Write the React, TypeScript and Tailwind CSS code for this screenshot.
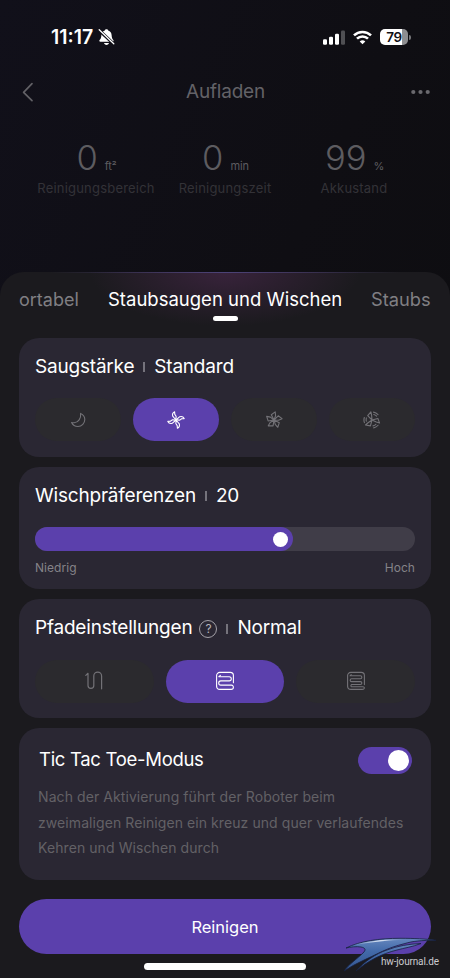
import { ReactNode, useState } from 'react';
import clsx from 'clsx';

const STATS = [
  { value: '0', unit: 'ft²', label: 'Reinigungsbereich', width: 'w-[126px]' },
  { value: '0', unit: 'min', label: 'Reinigungszeit', width: 'w-[132px]' },
  { value: '99', unit: '%', label: 'Akkustand', width: 'w-[126px]' },
];

function BellOffIcon() {
  return (
    <svg width="17" height="18" viewBox="0 0 17 18" fill="none">
      <path
        d="M8.5 1.2c.9 0 1.5.5 1.7 1.2 2.2.6 3.3 2.3 3.4 4.6.1 2.9.8 4 1.7 5 .6.7.2 1.8-.8 1.8H2.4c-1 0-1.4-1.1-.8-1.8 1-1 1.7-2.1 1.8-5 .1-2.3 1.2-4 3.4-4.6.2-.7.8-1.2 1.7-1.2Z"
        fill="#fff"
      />
      <path d="M6 15h5c-.2 1.1-1.2 1.9-2.5 1.9S6.2 16.1 6 15Z" fill="#fff" />
      <path d="M1 2.2 16 16.2" stroke="#111018" strokeWidth="3.2" />
      <path d="M1.2 1.8 15.8 15.8" stroke="#fff" strokeWidth="1.3" strokeLinecap="round" />
    </svg>
  );
}

function SignalIcon() {
  return (
    <svg width="22" height="15" viewBox="0 0 22 15" fill="#fff">
      <rect x="0" y="9.2" width="4" height="5.5" rx="1.2" />
      <rect x="6" y="6.8" width="4" height="7.9" rx="1.2" />
      <rect x="12" y="3.8" width="4" height="10.9" rx="1.2" />
      <rect x="18" y="0.6" width="4" height="14.1" rx="1.2" opacity=".27" />
    </svg>
  );
}

function WifiIcon() {
  return (
    <svg width="19" height="15" viewBox="0 0 19 15" fill="none" stroke="#fff" strokeWidth="2.6">
      <path d="M1 5.4a12.2 12.2 0 0 1 17 0" />
      <path d="M4 8.7a7.8 7.8 0 0 1 11 0" />
      <path d="M6.7 11.4a4.2 4.2 0 0 1 5.6 0L9.5 14.3Z" fill="#fff" stroke="none" />
    </svg>
  );
}

function StatusBar() {
  return (
    <div className="flex h-[74px] items-center pl-[51px] pr-[39px]">
      <span className="w-[46px] pt-px text-[19.5px] font-semibold text-white">11:17</span>
      <div className="ml-px">
        <BellOffIcon />
      </div>
      <div className="ml-auto flex items-center">
        <SignalIcon />
        <div className="ml-2">
          <WifiIcon />
        </div>
        <div className="ml-2 flex h-4 w-[28px] items-center justify-center rounded-[5px] bg-[linear-gradient(90deg,#fff_78%,#8d8d90_78%)] text-[13.5px] font-semibold tracking-[-0.3px] text-[#111016]">
          79
        </div>
        <div className="ml-px h-[5px] w-[2px] rounded-r-full bg-[#77767a]" />
      </div>
    </div>
  );
}

function MoonIcon() {
  return (
    <svg width="18" height="18" viewBox="0 0 18 18" fill="none" stroke="currentColor" strokeWidth="1.1" strokeLinejoin="round">
      <path d="M11.6 2.4c2.6 1.1 4.2 3.5 4.2 6.2 0 3.8-3 6.9-6.9 6.9-2.8 0-5.2-1.6-6.3-4 .8.2 1.7.3 2.6.2 4-.3 7.1-4.3 6.4-9.3Z" />
    </svg>
  );
}

function FanIcon() {
  return (
    <svg width="18" height="18" viewBox="0 0 18 18" fill="none" stroke="currentColor" strokeWidth="1.1" strokeLinejoin="round">
      {[0, 90, 180, 270].map((deg) => (
        <path
          key={deg}
          d="M9 9 5.7 5.2C5.2 3.4 6 1.6 7.6.8L7.8 3.4 9.1 5.2Z"
          transform={`rotate(${deg} 9 9)`}
        />
      ))}
    </svg>
  );
}

function StrongFanIcon() {
  return (
    <svg width="18" height="18" viewBox="0 0 18 18" fill="none" stroke="currentColor" strokeWidth="1.1" strokeLinejoin="round">
      {[0, 72, 144, 216, 288].map((deg) => (
        <path key={deg} d="M9 9 6.3 3.7 10.2.9 10.6 4.7Z" transform={`rotate(${deg} 9 9)`} />
      ))}
    </svg>
  );
}

function TurboFanIcon() {
  return (
    <svg width="18" height="18" viewBox="0 0 18 18" fill="none" stroke="currentColor" strokeWidth="1.1" strokeLinejoin="round" strokeLinecap="round">
      {[0, 120, 240].map((deg) => (
        <g key={deg} transform={`rotate(${deg} 9 9)`}>
          <path d="M9 9 4.7 4.7 7.9.9 8.6 4.2Z" />
          <path d="M10.5 1.1A8.2 8.2 0 0 1 15 3.6M10.8 3.5A5.9 5.9 0 0 1 13.6 5.2" />
        </g>
      ))}
    </svg>
  );
}

function LoosePathIcon() {
  return (
    <svg width="20" height="20" viewBox="0 0 20 20" fill="none" stroke="currentColor" strokeWidth="1.2" strokeLinecap="round" strokeLinejoin="round">
      <path d="M1.8 4.4 4 2.3v12.2a2.9 2.9 0 0 0 5.8 0V5a3.9 3.9 0 0 1 7.8 0v12.8" />
    </svg>
  );
}

function NormalPathIcon() {
  return (
    <svg width="20" height="20" viewBox="0 0 20 20" fill="none" stroke="currentColor" strokeWidth="1.1" strokeLinecap="round" strokeLinejoin="round">
      <path d="M1.6 15V4.6a3.2 3.2 0 0 1 3.2-3.2h10.4a3.2 3.2 0 0 1 3.2 3.2v7.2" />
      <path d="M5.4 4.3 3.8 5.7h10.4a2.1 2.1 0 0 1 0 4.2H5.8a2.1 2.1 0 0 0 0 4.2h10.7a2 2 0 0 1 1.9 2.2 2.2 2.2 0 0 1-2.2 2.1H5a3.4 3.4 0 0 1-3.4-3.4" />
    </svg>
  );
}

function DensePathIcon() {
  return (
    <svg width="20" height="20" viewBox="0 0 20 20" fill="none" stroke="currentColor" strokeWidth="1.1" strokeLinecap="round" strokeLinejoin="round">
      <path d="M1.6 15V4.6a3.2 3.2 0 0 1 3.2-3.2h10.4a3.2 3.2 0 0 1 3.2 3.2v9" />
      <path d="M5.2 3.7 4 4.8h10.4a1.45 1.45 0 0 1 0 2.9H5.6a1.45 1.45 0 0 0 0 2.9h8.8a1.45 1.45 0 0 1 0 2.9H5.6a1.3 1.3 0 0 0 0 2.3h11.2c2.3 0 2 2.6-.6 2.6H5A3.4 3.4 0 0 1 1.6 15" />
    </svg>
  );
}

function Card({ className, children }: { className?: string; children: ReactNode }) {
  return <section className={clsx('rounded-[20px] bg-[#2a2733] px-4', className)}>{children}</section>;
}

function CardTitle({ children }: { children: ReactNode }) {
  return (
    <h2 className="flex h-[56px] items-center pt-[3px] text-[19px] tracking-[-0.2px] text-white">{children}</h2>
  );
}

function Divider() {
  return <span className="mx-[9px] h-[10px] w-[2px] shrink-0 bg-[#75737c]" />;
}

interface PillProps {
  active: boolean;
  label: string;
  onClick: () => void;
  children: ReactNode;
}

function Pill({ active, label, onClick, children }: PillProps) {
  return (
    <button
      type="button"
      aria-label={label}
      onClick={onClick}
      className={clsx(
        'flex h-[43px] items-center justify-center rounded-full',
        active ? 'bg-[#5b40ac] text-white' : 'bg-[#2b2a2e] text-[#737277]'
      )}
    >
      {children}
    </button>
  );
}

const SUCTION = [
  { label: 'Leise', icon: <MoonIcon /> },
  { label: 'Standard', icon: <FanIcon /> },
  { label: 'Stark', icon: <StrongFanIcon /> },
  { label: 'Turbo', icon: <TurboFanIcon /> },
];

const PATHS = [
  { label: 'Schnell', icon: <LoosePathIcon /> },
  { label: 'Normal', icon: <NormalPathIcon /> },
  { label: 'Gründlich', icon: <DensePathIcon /> },
];

function Watermark() {
  return (
    <div className="absolute bottom-0 right-0 h-[48px] w-[110px]">
      <svg width="110" height="48" viewBox="0 0 110 48" className="absolute inset-0">
        <defs>
          <linearGradient id="wing" x1="0" y1="0" x2="0" y2="1">
            <stop offset="0" stopColor="#6486bd" />
            <stop offset=".4" stopColor="#426aa9" />
            <stop offset="1" stopColor="#34558f" />
          </linearGradient>
          <linearGradient id="shine" x1="0" y1="0" x2="1" y2="0">
            <stop offset="0" stopColor="#8ea6cc" stopOpacity=".2" />
            <stop offset=".5" stopColor="#e6eef8" />
            <stop offset="1" stopColor="#8ea6cc" stopOpacity=".1" />
          </linearGradient>
        </defs>
        <g fill="url(#wing)" stroke="#17203f" strokeWidth=".8">
          <path d="M6 18C20 11 40 8.300 60 8.300c14 0 26 .6 36 2-14-.2-24 1-31 3.200-9 2.300-17 5-24 8.500C29 28 16 33 4 41c5-7 13-12 19-18 3-3 3-5-2-6-5-.8-10 0-15 1Z" />
          <path d="M16 41c8-9 19-17 31-21 10-4 22-6 34-6.500-9 3.500-17 4.500-24 6.500-16 4-29 11-41 21Z" />
        </g>
        <path d="M12 15.500C28 10.500 46 9 68 9.600 48 10.600 30 12 12 15.500Z" fill="url(#shine)" />
      </svg>
      <span className="absolute left-[41px] top-[25px] font-[Roboto,sans-serif] text-[10px] leading-[14px] tracking-[-0.15px] text-[#cbcbd0]">
        hw-journal.de
      </span>
    </div>
  );
}

export default function App() {
  const [suction, setSuction] = useState('Standard');
  const [path, setPath] = useState('Normal');
  const [ticTacToe, setTicTacToe] = useState(true);

  return (
    <div className="relative flex h-[978px] w-[450px] flex-col overflow-hidden bg-[linear-gradient(115deg,#11101a_0%,#0f0e13_45%,#0c0c0e_100%)] font-[Inter,sans-serif]">
      <StatusBar />

      <header className="flex h-[36px] items-center justify-between pl-[22px] pr-[20px]">
        <svg width="12" height="20" viewBox="0 0 12 20" fill="none" stroke="#626166" strokeWidth="1.7" strokeLinecap="round" strokeLinejoin="round">
          <path d="M10 1.700 1.600 10.300 10 18.700" />
        </svg>
        <h1 className="pl-[6px] text-[19px] tracking-[-0.2px] text-[#636267]">Aufladen</h1>
        <svg width="19" height="6" viewBox="0 0 19 6" fill="#6a696e">
          <circle cx="2.3" cy="3" r="2.1" />
          <circle cx="9.5" cy="3" r="2.1" />
          <circle cx="16.7" cy="3" r="2.1" />
        </svg>
      </header>

      <div className="flex h-[162px] justify-center pt-[28px]">
        {STATS.map((stat) => (
          <div key={stat.label} className={clsx('flex flex-col items-center whitespace-nowrap', stat.width)}>
            <div className="flex h-[41px] items-baseline gap-[7px] pl-px leading-10 text-[#5d5c60]">
              <span className="text-[34.5px] font-light">{stat.value}</span>
              <span className="text-[11px] tracking-[-0.1px]">{stat.unit}</span>
            </div>
            <div className="text-[13px] leading-[18px] tracking-[0.2px] text-[#333237]">{stat.label}</div>
          </div>
        ))}
      </div>

      <main className="flex flex-1 flex-col rounded-t-[24px] bg-[#1b1a1e] bg-[radial-gradient(ellipse_135px_54px_at_50%_0,#38233b_0%,#1b1a1e_100%)] bg-no-repeat">
        <div className="mx-[50px] h-px bg-[linear-gradient(90deg,transparent,#4c4377_50%,transparent)]" />
        <nav className="mx-[19px] flex h-[52px] justify-center overflow-hidden whitespace-nowrap text-[18px] leading-[53px]">
          <span className="w-[89px] text-[#807f83]">ortabel</span>
          <span className="w-[235px] text-[18.5px] text-white">Staubsaugen und Wischen</span>
          <span className="w-[88px] pl-[28px] text-[18.3px] text-[#807f83]">Staubs</span>
        </nav>
        <div className="mx-auto -mt-[9px] h-[5px] w-[25px] rounded-full bg-white" />

        <div className="flex flex-col gap-[10px] px-[19px] pt-[16.5px]">
          <Card className="h-[119px]">
            <CardTitle>
              Saugstärke
              <Divider />
              {suction}
            </CardTitle>
            <div className="mt-[4.5px] grid grid-cols-4 gap-3">
              {SUCTION.map(({ label, icon }) => (
                <Pill key={label} label={label} active={suction === label} onClick={() => setSuction(label)}>
                  {icon}
                </Pill>
              ))}
            </div>
          </Card>

          <Card className="h-[122.5px]">
            <CardTitle>
              Wischpräferenzen
              <Divider />
              20
            </CardTitle>
            <div className="mt-[4.5px] h-6 rounded-full bg-[#403d48]">
              <div className="flex h-6 w-[258px] items-center justify-end rounded-full bg-[#5b40ac] pr-[5px]">
                <div className="size-[15px] rounded-full bg-white" />
              </div>
            </div>
            <div className="mt-2 flex justify-between text-[12px] leading-[17px] tracking-[0.05px] text-[#858388]">
              <span>Niedrig</span>
              <span>Hoch</span>
            </div>
          </Card>

          <Card className="h-[119px]">
            <CardTitle>
              Pfadeinstellungen
              <span className="ml-[7px] flex size-[18px] items-center justify-center rounded-full border-[1.5px] border-[#a3a1a8] text-[12px] text-[#b5b3ba]">
                ?
              </span>
              <Divider />
              {path}
            </CardTitle>
            <div className="mt-[4.5px] grid grid-cols-3 gap-3">
              {PATHS.map(({ label, icon }) => (
                <Pill key={label} label={label} active={path === label} onClick={() => setPath(label)}>
                  {icon}
                </Pill>
              ))}
            </div>
          </Card>

          <Card className="h-[151.5px]">
            <div className="flex h-[64px] items-center justify-between pl-1 pr-[3px]">
              <h2 className="text-[18.5px] tracking-[-0.3px] text-white">Tic Tac Toe-Modus</h2>
              <button
                type="button"
                role="switch"
                aria-checked={ticTacToe}
                aria-label="Tic Tac Toe-Modus"
                onClick={() => setTicTacToe(!ticTacToe)}
                className={clsx(
                  'flex h-[27px] w-[54px] items-center rounded-full px-[3px]',
                  ticTacToe ? 'justify-end bg-[#5b40ac]' : 'justify-start bg-[#403d48]'
                )}
              >
                <span className="size-[21px] rounded-full bg-white" />
              </button>
            </div>
            <p className="-mt-[8px] whitespace-nowrap pl-[3px] text-[14px] leading-[25.7px] tracking-[0.08px] text-[#636166]">
              Nach der Aktivierung führt der Roboter beim
              <br />
              zweimaligen Reinigen ein kreuz und quer verlaufendes
              <br />
              Kehren und Wischen durch
            </p>
          </Card>
        </div>

        <button type="button" className="mx-[19px] mt-[19.5px] h-[55px] rounded-full bg-[#5b40ac] pt-px text-[16.5px] text-white">
          Reinigen
        </button>
        <div className="mx-auto mt-[9px] h-[6.5px] w-[162px] rounded-full bg-white" />
      </main>

      <Watermark />
    </div>
  );
}
